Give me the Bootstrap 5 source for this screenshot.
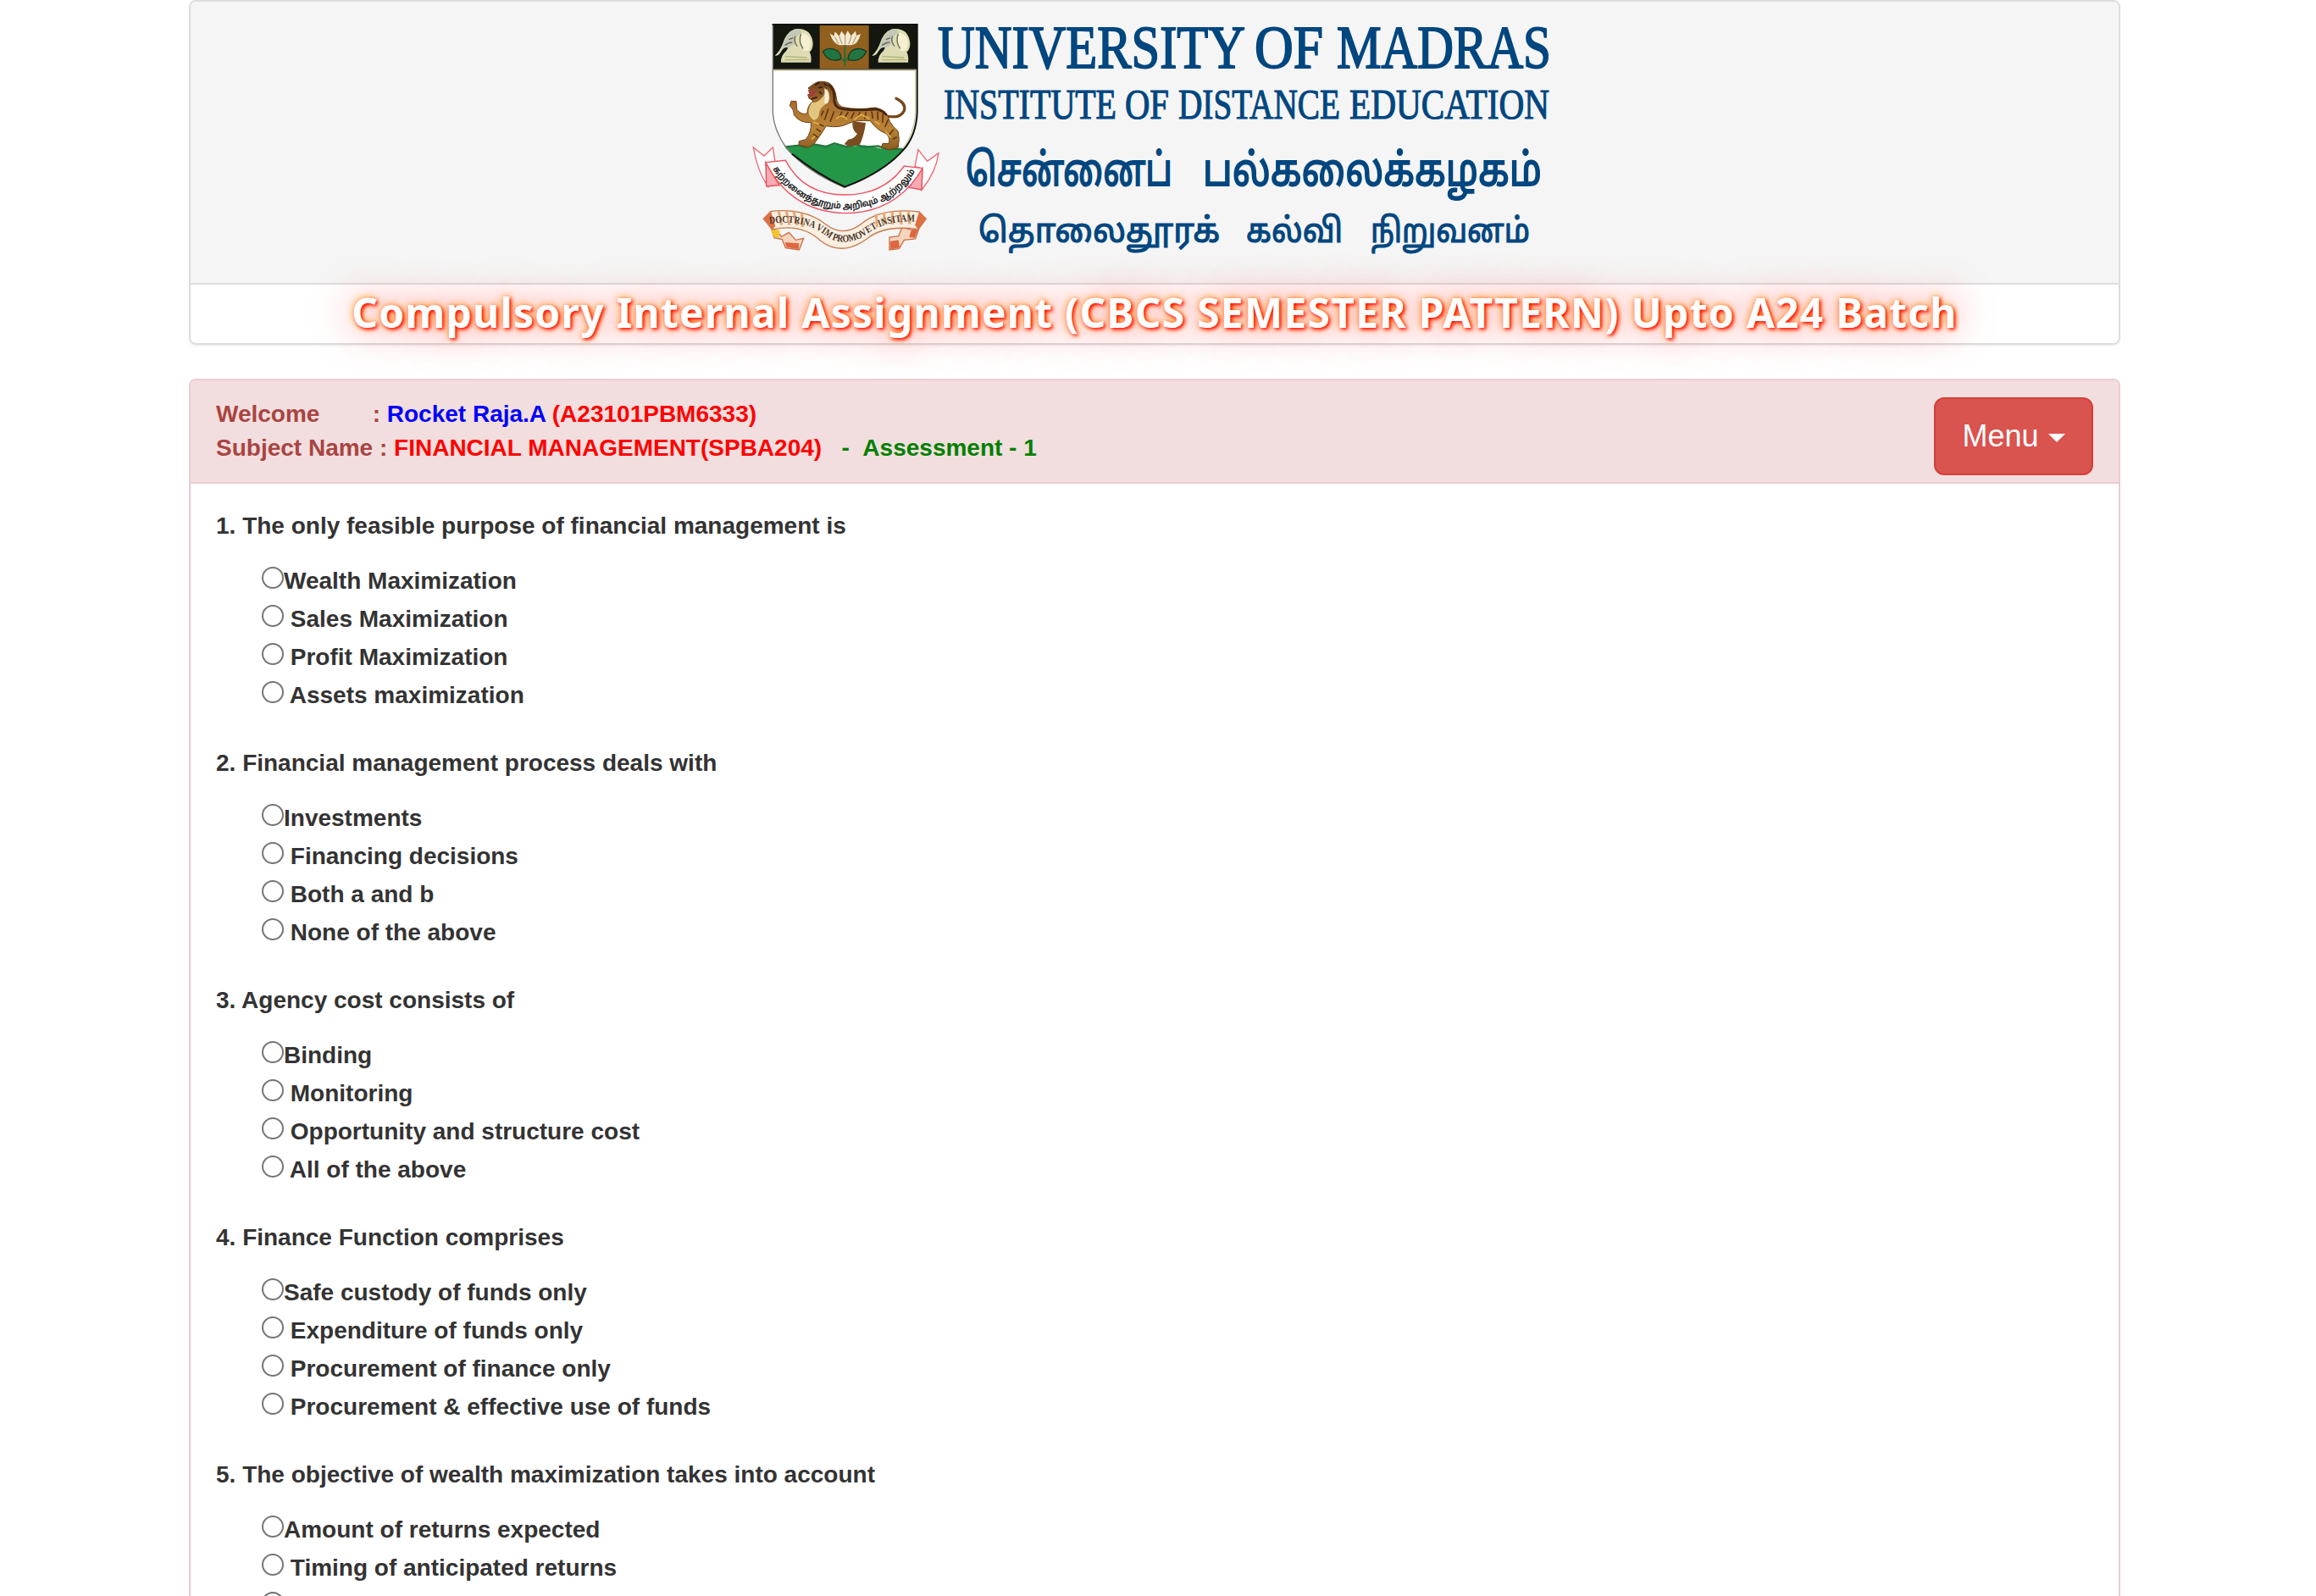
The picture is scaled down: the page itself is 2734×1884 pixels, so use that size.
<!DOCTYPE html>
<html lang="en">
<head>
<meta charset="utf-8">
<title>Compulsory Internal Assignment</title>
<link href="https://cdn.jsdelivr.net/npm/bootstrap@5.3.0/dist/css/bootstrap.min.css" rel="stylesheet">
<style>
body{font-family:"Liberation Sans",Arial,sans-serif;font-size:28px;line-height:40px;color:#333;background:#fff;height:1884px;overflow:hidden}
.page-wrap{width:2280px;margin-left:223px}
.head-panel{border:2px solid #ddd;border-radius:8px;height:407px;margin-bottom:40px;box-shadow:0 2px 2px rgba(0,0,0,.05)}
.logo-area{background:#f5f5f5;border-bottom:2px solid #ddd;height:334px;border-radius:6px 6px 0 0}
.logo-area svg{overflow:visible;margin-left:2px}
.banner-title{font-family:"Noto Sans",sans-serif;font-weight:700;font-size:48px;line-height:66px;letter-spacing:1.23px;color:#fff;text-shadow:2px 2px 4px red,0 0 48px rgba(255,0,0,.65),0 0 10px orange}
.quiz-panel{border:2px solid #ebccd1;border-radius:8px;height:1600px}
.quiz-head{background:#f2dede;border-bottom:2px solid #ebccd1;color:#a94442;height:122px;padding:20px 30px;border-radius:6px 6px 0 0}
.student-name{color:#00f}
.btn-menu{--bs-btn-color:#fff;--bs-btn-bg:#d9534f;--bs-btn-border-color:#d43f3a;width:188px;height:92px;border-width:2px;border-radius:12px;font-size:36px;line-height:48px;padding:0}
.btn-menu::after{border-top-width:10px;border-right-width:10px;border-left-width:10px;margin-left:11px;vertical-align:5px}
.quiz-body{padding:30px 30px}
.question{height:280px}
.options{padding:22px 0 0 54px}
.opt{height:45px;line-height:45px;white-space:pre}
.opt input{appearance:none;width:26px;height:26px;border:2px solid #767676;border-radius:50%;background:#fff;margin:0;vertical-align:baseline}
</style>
<script src="https://cdn.jsdelivr.net/npm/bootstrap@5.3.0/dist/js/bootstrap.bundle.min.js"></script>
</head>
<body>
<div class="page-wrap">
<header class="head-panel">
<div class="logo-area d-flex justify-content-center">
<svg width="960" height="332" viewBox="884 2 960 332" role="img" aria-label="University of Madras">
<defs>
<clipPath id="shieldClip"><path d="M157 87H668V400Q664 480 620 530Q550 610 412 664Q280 610 205 525Q160 460 157 400Z"/></clipPath>
<path id="mottoTop" d="M156 598Q250 735 410 740Q575 738 662 606"/>
<path id="mottoLow" d="M145 792Q270 775 345 835Q400 876 475 840Q560 770 685 788"/>
<linearGradient id="fur" x1="0" y1="0" x2="0" y2="1"><stop offset="0" stop-color="#6d421a"/><stop offset=".35" stop-color="#ac7230"/><stop offset=".7" stop-color="#b98436"/><stop offset="1" stop-color="#8a5a20"/></linearGradient>
<g id="elephant"><path d="M186 221Q184 198 204 181L211 169Q196 164 186 183Q178 199 164 197Q180 184 190 160Q203 114 235 103Q262 98 283 114Q299 132 299 158Q297 177 287 184Q295 200 292 221Z" fill="#dedcb4"/><path d="M193 157Q207 115 236 105Q256 99 260 118Q240 120 236 154Q224 166 211 169Q196 164 186 183Q193 168 193 157Z" fill="#c2c7b6"/><path d="M258 116Q242 148 266 178Q290 190 291 150Q288 118 258 116Z" fill="#f5f0cf"/><path d="M257 120Q246 146 264 172M214 140L229 134M236 128Q230 148 244 164M200 160Q214 150 226 150" stroke="#66674e" stroke-width="4" fill="none"/><path d="M200 200L278 204M200 212H286" stroke="#b3b476" stroke-width="4"/></g>
</defs>
<g transform="translate(860 0) scale(.33333)">
<g clip-path="url(#shieldClip)">
<path d="M150 80H680V680H150Z" fill="#fff"/>
<path d="M150 522L240 518L300 512L350 518L385 509L425 520L480 514L540 526L680 528V680H150Z" fill="#239747"/>
<path d="M200 520L250 515L275 523L300 511L345 519L375 508L420 520L450 512L480 521L530 517L560 528H625" fill="none" stroke="#267640" stroke-width="7"/>
<path d="M155 85H670V245H155Z" fill="#13170f"/>
<path d="M323 88H497V243H323Z" fill="#91601f"/>
<use href="#elephant"/><use href="#elephant" x="344"/>
<path d="M359 118L373 128L377 112L392 128L400 110L413 127L422 109L434 127L450 110L453 126L468 120Q459 157 435 160H393Q370 155 359 118Z" fill="#f3ead1"/>
<path d="M376 130L390 156M392 128L402 156M413 125V157M435 127L426 156M452 128L440 155" stroke="#a98f62" stroke-width="3"/>
<path d="M412 160V235M410 216Q390 195 376 196M413 216Q425 202 440 198" fill="none" stroke="#2c6b36" stroke-width="6"/>
<path d="M334 182Q358 163 388 181Q402 196 396 210Q353 224 334 182ZM488 182Q460 163 434 182Q420 198 426 212Q470 222 488 182Z" fill="#237443" stroke="#163d21" stroke-width="4"/>
</g>
<path d="M157 87V400Q160 460 205 525Q280 610 412 664" fill="none" stroke="#77786e" stroke-width="4"/>
<path d="M157 248H664" stroke="#a89b69" stroke-width="4"/>
<path d="M155 87H668V400Q664 480 620 530Q550 610 412 662Q320 620 225 545" fill="none" stroke="#111" stroke-width="6"/>
<path d="M662 250V400Q657 475 616 528" fill="none" stroke="#c7c18a" stroke-width="3"/>
<path d="M550 408Q605 425 622 392Q630 366 594 349" fill="none" stroke="#744817" stroke-width="10" stroke-linecap="round"/>
<path d="M440 430Q435 460 456 474Q444 492 424 494L410 510L428 520L465 512Q480 480 486 435Z" fill="#7b4c20"/>
<path d="M282 312L304 296Q322 283 354 293Q377 306 382 346Q384 370 403 379Q455 391 520 381Q563 392 571 430Q580 447 600 464Q607 490 601 522L570 531L541 522L546 508L568 508Q574 487 558 473Q525 461 502 428Q450 424 423 438Q390 455 346 446Q322 485 303 509L285 522L249 514L250 500L274 494Q295 465 292 434Q252 436 232 407Q231 386 217 375L222 358L240 359L242 388Q259 409 279 401Q278 375 300 357L285 348L281 335L299 331Z" fill="url(#fur)" stroke="#6b3f17" stroke-width="3" stroke-linejoin="round"/>
<path d="M295 362Q312 369 335 342L350 315Q366 350 350 366Q321 378 320 410Q305 438 290 414Q275 395 295 362Z" fill="#e2c67f"/>
<path d="M340 312Q364 328 352 364Q336 374 341 350Z" fill="#f6eed4"/>
<path d="M354 299Q379 318 374 356Q378 384 408 386Q458 393 522 386Q548 390 560 408" fill="none" stroke="#4a2810" stroke-width="9"/>
<path d="M402 395L392 417M424 396L410 419M445 398L434 420M466 397L457 416M487 396L482 422M507 394L511 420M528 395L529 425M547 402L545 435M565 424L554 450M585 458L570 476M596 485L582 493M336 392L328 410M354 385L340 425M374 394L360 431M319 439L337 447M311 456L326 466M300 475L316 486" stroke="#643611" stroke-width="5"/>
<path d="M382 422Q400 400 420 423M444 424L469 406L500 421M518 430L536 440M555 465L575 487M300 432L322 440M294 494L306 482" stroke="#e0af48" stroke-width="5" fill="none"/>
<path d="M281 318L308 322L305 340L290 344Z" fill="#a13d3c"/><path d="M319 311L333 308M306 302L322 292M322 324L330 334M293 351L314 344M338 296L350 304" stroke="#301b0d" stroke-width="5"/>
<path d="M88 522L126 552L157 522L165 573L132 576L140 660Q104 610 88 522ZM672 530L704 571L744 542Q735 610 684 672L686 596L660 590Z" fill="#fff" stroke="#ef6570" stroke-width="4"/>
<path d="M132 576L180 656L134 660ZM687 596L684 672L638 664Z" fill="#f7abb2" stroke="#e84755" stroke-width="4"/>
<path d="M132 575L202 568Q265 690 412 690Q550 690 622 588L687 596Q595 755 412 755Q220 750 132 575Z" fill="#fff" stroke="#ee5260" stroke-width="4"/>
<text font-family="Noto Sans Tamil,Noto Sans,sans-serif" font-size="32" font-weight="700" fill="#222"><textPath href="#mottoTop" textLength="600" lengthAdjust="spacingAndGlyphs">கற்றனைத்தூறும் அறிவும் ஆற்றலும்</textPath></text>
<path d="M150 805L173 820L188 838L214 823L238 850L266 844L250 885L202 878L190 848L162 842ZM676 805L650 815L615 805L602 836L570 840V885L604 881L622 850L662 846Z" fill="#f6d5bd" stroke="#cd704a" stroke-width="4"/>
<path d="M150 810L182 816L178 842L158 836Z" fill="#f4c52b"/><path d="M200 858L250 862L248 883L205 875ZM646 818L674 805L660 842L640 840ZM572 855L602 850L606 877L574 884Z" fill="#de6740"/>
<path d="M124 775L150 748Q270 735 345 795Q410 845 480 785Q550 735 675 750L700 775L672 812Q550 795 490 846Q400 910 326 853Q260 790 155 813Z" fill="#fbefe1" stroke="#c6794e" stroke-width="4"/>
<path d="M124 775L150 748L166 800L155 813ZM700 775L675 750L660 798L672 812Z" fill="#df7044"/>
<path d="M178 749L188 797M205 748L216 797M231 749L243 798M260 756L262 804M523 758L526 805M551 752L552 796M580 749L581 794M608 749L612 795M637 750L642 794" stroke="#e4a879" stroke-width="9"/>
<text font-family="Liberation Serif,serif" font-size="36" font-weight="700" fill="#493a2c"><textPath href="#mottoLow" textLength="545" lengthAdjust="spacingAndGlyphs">DOCTRINA VIM PROMOVET INSITAM</textPath></text>
</g>
<g fill="#00467f" stroke="#00467f">
<g font-family="Liberation Serif,serif" stroke-width="1.8">
<text x="1107" y="80" font-size="71" textLength="363" lengthAdjust="spacingAndGlyphs">UNIVERSITY</text>
<text x="1481" y="80" font-size="71" textLength="81" lengthAdjust="spacingAndGlyphs">OF</text>
<text x="1578" y="80" font-size="71" textLength="253" lengthAdjust="spacingAndGlyphs">MADRAS</text>
</g>
<g font-family="Liberation Serif,serif" stroke-width="1.2">
<text x="1114" y="140" font-size="51" textLength="204" lengthAdjust="spacingAndGlyphs">INSTITUTE</text>
<text x="1328" y="140" font-size="51" textLength="52" lengthAdjust="spacingAndGlyphs">OF</text>
<text x="1391" y="140" font-size="51" textLength="191" lengthAdjust="spacingAndGlyphs">DISTANCE</text>
<text x="1593" y="140" font-size="51" textLength="236" lengthAdjust="spacingAndGlyphs">EDUCATION</text>
</g>
<g font-family="Noto Sans Tamil,Noto Sans,sans-serif" stroke-width="1.8">
<text x="1140" y="219" font-size="53" textLength="244" lengthAdjust="spacingAndGlyphs">சென்னைப்</text>
<text x="1420" y="219" font-size="53" textLength="400" lengthAdjust="spacingAndGlyphs">பல்கலைக்கழகம்</text>
</g>
<g font-family="Noto Sans Tamil,Noto Sans,sans-serif" stroke-width="1.2">
<text x="1155" y="286" font-size="40" textLength="285" lengthAdjust="spacingAndGlyphs">தொலைதூரக்</text>
<text x="1471" y="286" font-size="40" textLength="114" lengthAdjust="spacingAndGlyphs">கல்வி</text>
<text x="1618" y="286" font-size="40" textLength="188" lengthAdjust="spacingAndGlyphs">நிறுவனம்</text>
</g>
</g>
</svg>
</div>
<div class="banner-title text-center text-nowrap">Compulsory Internal Assignment (CBCS SEMESTER PATTERN) Upto A24 Batch</div>
</header>
<main class="quiz-panel">
<div class="quiz-head d-flex justify-content-between fw-bold">
<div class="text-nowrap">Welcome &nbsp; &nbsp; &nbsp; &nbsp;: <span class="student-name">Rocket Raja.A</span> <span style="color:red">(A23101PBM6333)</span><br>Subject Name : <span style="color:red">FINANCIAL MANAGEMENT(SPBA204)</span> &nbsp;<span style="color:green"> - &nbsp;Assessment - 1</span></div>
<button class="btn btn-menu dropdown-toggle" type="button">Menu</button>
</div>
<div class="quiz-body fw-bold">
<section class="question"><div>1. The only feasible purpose of financial management is</div><div class="options"><div class="opt"><input type="radio" name="q1">Wealth Maximization</div><div class="opt"><input type="radio" name="q1"> Sales Maximization</div><div class="opt"><input type="radio" name="q1"> Profit Maximization</div><div class="opt"><input type="radio" name="q1"> Assets maximization</div></div></section>
<section class="question"><div>2. Financial management process deals with</div><div class="options"><div class="opt"><input type="radio" name="q2">Investments</div><div class="opt"><input type="radio" name="q2"> Financing decisions</div><div class="opt"><input type="radio" name="q2"> Both a and b</div><div class="opt"><input type="radio" name="q2"> None of the above</div></div></section>
<section class="question"><div>3. Agency cost consists of</div><div class="options"><div class="opt"><input type="radio" name="q3">Binding</div><div class="opt"><input type="radio" name="q3"> Monitoring</div><div class="opt"><input type="radio" name="q3"> Opportunity and structure cost</div><div class="opt"><input type="radio" name="q3"> All of the above</div></div></section>
<section class="question"><div>4. Finance Function comprises</div><div class="options"><div class="opt"><input type="radio" name="q4">Safe custody of funds only</div><div class="opt"><input type="radio" name="q4"> Expenditure of funds only</div><div class="opt"><input type="radio" name="q4"> Procurement of finance only</div><div class="opt"><input type="radio" name="q4"> Procurement &amp; effective use of funds</div></div></section>
<section class="question"><div>5. The objective of wealth maximization takes into account</div><div class="options"><div class="opt"><input type="radio" name="q5">Amount of returns expected</div><div class="opt"><input type="radio" name="q5"> Timing of anticipated returns</div><div class="opt"><input type="radio" name="q5"> </div></div></section>
</div>
</main>
</div>
</body>
</html>
